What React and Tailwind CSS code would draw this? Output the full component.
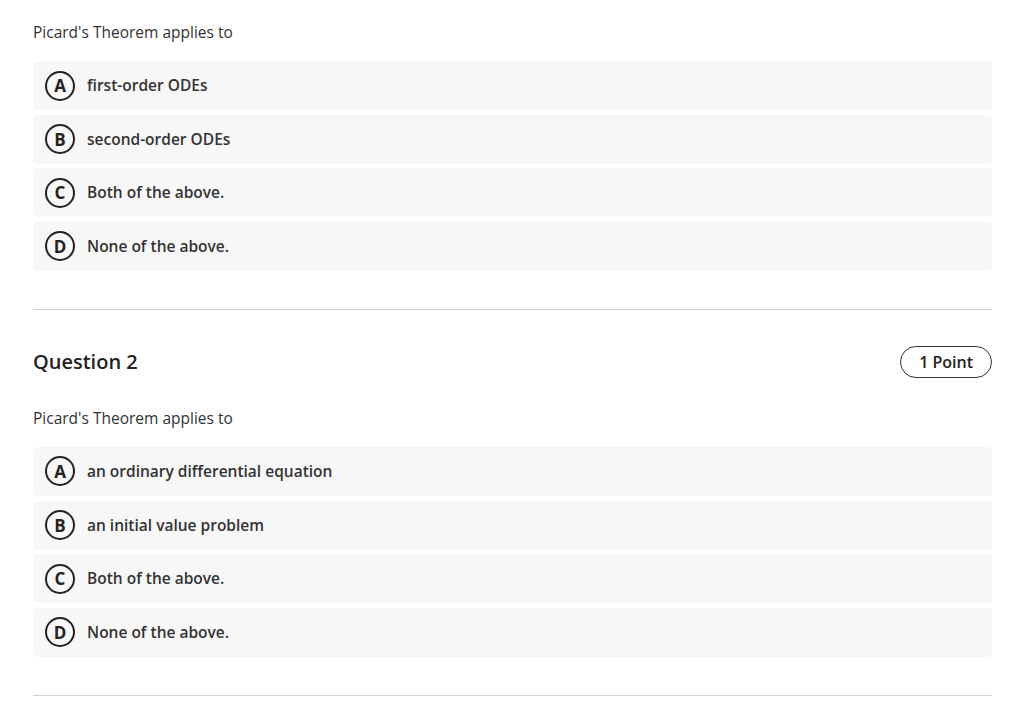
import React from 'react'

const questions = [
  {
    heading: null,
    prompt: "Picard's Theorem applies to",
    options: ['first-order ODEs', 'second-order ODEs', 'Both of the above.', 'None of the above.'],
  },
  {
    heading: 'Question 2',
    points: '1 Point',
    prompt: "Picard's Theorem applies to",
    options: ['an ordinary differential equation', 'an initial value problem', 'Both of the above.', 'None of the above.'],
  },
]

const letters = ['A', 'B', 'C', 'D']

function Option({ letter, text }) {
  return (
    <div className="h-[49px] bg-[#f7f7f7] rounded-[4px] flex items-center pl-[12px] gap-[12px]">
      <div className="w-[30px] h-[30px] rounded-full border-2 border-[#222] flex items-center justify-center text-[17px] font-bold text-[#222] leading-none">
        {letter}
      </div>
      <span className="text-[15.5px] font-semibold text-[#333]">{text}</span>
    </div>
  )
}

function Question({ q, first }) {
  return (
    <div className={first ? 'pt-[21px]' : 'pt-[36px]'}>
      {q.heading && (
        <div className="flex items-center justify-between h-[32px] mb-[29px]">
          <h2 className="text-[20px] font-semibold text-[#222]">{q.heading}</h2>
          <span className="h-[32px] px-[18px] rounded-full border border-[#333] flex items-center text-[16px] font-semibold text-[#222]">
            {q.points}
          </span>
        </div>
      )}
      <p className="text-[15.5px] leading-[22px] text-[#333] mb-[18px]">{q.prompt}</p>
      <div className="flex flex-col gap-[4.67px]">
        {q.options.map((o, i) => (
          <Option key={i} letter={letters[i]} text={o} />
        ))}
      </div>
      <div className="mt-[38px] border-t border-[#cfcfcf]" />
    </div>
  )
}

export default function App() {
  return (
    <div className="w-[1024px] h-[704px] bg-white overflow-hidden" style={{ fontFamily: '"Open Sans", sans-serif' }}>
      <div className="ml-[33px] w-[959px]">
        {questions.map((q, i) => (
          <Question key={i} q={q} first={i === 0} />
        ))}
      </div>
    </div>
  )
}
